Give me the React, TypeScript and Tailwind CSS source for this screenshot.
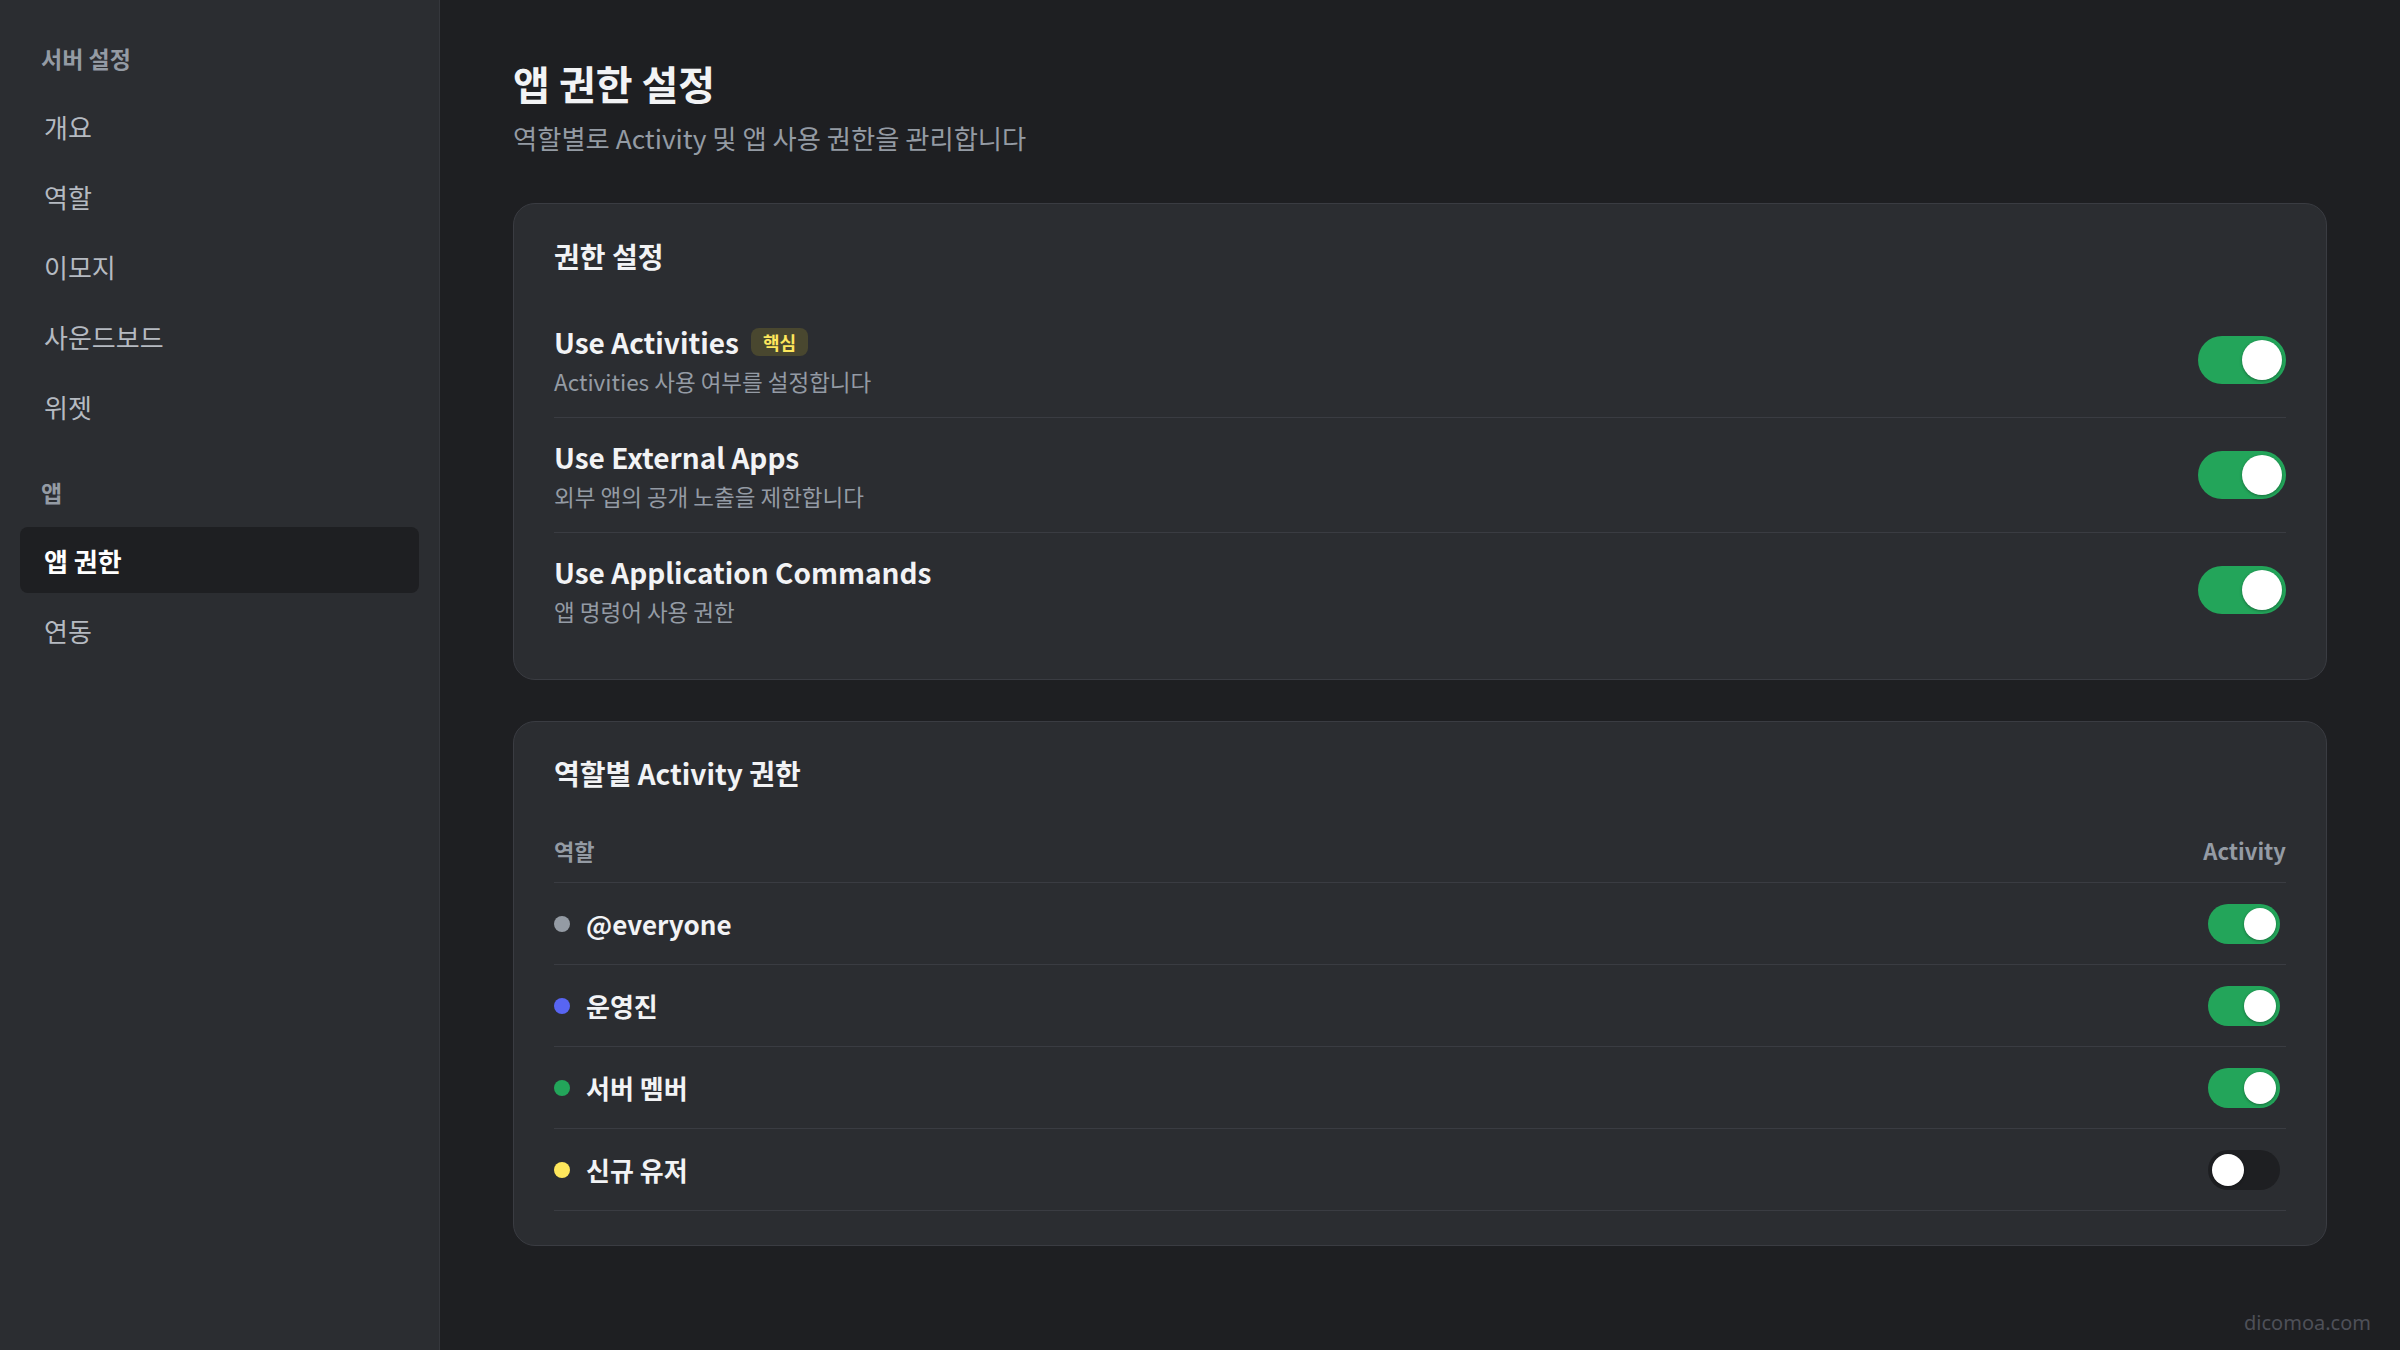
import React from "react";

const navGroups = [
  { title: "서버 설정", items: ["개요", "역할", "이모지", "사운드보드", "위젯"] },
  { title: "앱", items: ["앱 권한", "연동"] },
];

const permissions = [
  { name: "Use Activities", desc: "Activities 사용 여부를 설정합니다", badge: "핵심", on: true },
  { name: "Use External Apps", desc: "외부 앱의 공개 노출을 제한합니다", badge: "", on: true },
  { name: "Use Application Commands", desc: "앱 명령어 사용 권한", badge: "", on: true },
];

const roles = [
  { name: "@everyone", dot: "bg-[#949ba4]", on: true },
  { name: "운영진", dot: "bg-[#5865f2]", on: true },
  { name: "서버 멤버", dot: "bg-[#23a55a]", on: true },
  { name: "신규 유저", dot: "bg-[#fee75c]", on: false },
];

function BigToggle({ on }: { on: boolean }) {
  return (
    <div className={`flex h-[48px] w-[88px] shrink-0 rounded-full p-1 ${on ? "justify-end bg-[#23a55a]" : "justify-start bg-[#1e1f22]"}`}>
      <div className="size-10 rounded-full bg-white shadow-[0_1px_3px_rgba(0,0,0,0.35)]" />
    </div>
  );
}

function SmallToggle({ on }: { on: boolean }) {
  return (
    <div className={`flex h-10 w-[72px] rounded-full p-1 ${on ? "justify-end bg-[#23a55a]" : "justify-start bg-[#1e1f22]"}`}>
      <div className="size-8 rounded-full bg-white shadow-[0_1px_3px_rgba(0,0,0,0.35)]" />
    </div>
  );
}

export default function App() {
  return (
    <div className="relative flex min-h-screen bg-[#1e1f22] font-['Noto_Sans_CJK_KR','Noto_Sans',sans-serif]">
      {/* Sidebar */}
      <aside className="w-[440px] shrink-0 border-r border-[#35373c] bg-[#2b2d31] px-5 pt-[44px]">
        {navGroups.map((group, gi) => (
          <div key={group.title} className={gi > 0 ? "mt-[39px]" : ""}>
            <h2 className="mb-[21px] pl-[21px] text-[23px] font-bold leading-[28px] text-[#949ba4]">{group.title}</h2>
            <nav className="space-y-1">
              {group.items.map((item) => {
                const active = item === "앱 권한";
                return (
                  <div
                    key={item}
                    className={`flex h-[66px] items-center rounded-lg px-6 text-[26px] ${active ? "bg-[#1e1f22] font-bold text-white" : "text-[#b5bac1]"}`}
                  >
                    {item}
                  </div>
                );
              })}
            </nav>
          </div>
        ))}
      </aside>

      {/* Main */}
      <main className="flex-1 px-[73px] pt-[58px] pb-16">
        <h1 className="text-[40px] font-bold leading-[50px] text-[#f2f3f5]">앱 권한 설정</h1>
        <p className="mt-[13px] text-[26.3px] leading-[34px] text-[#949ba4]">역할별로 Activity 및 앱 사용 권한을 관리합니다</p>

        {/* Permission settings */}
        <section className="mt-[48px] rounded-[22px] border border-[#3a3c42] bg-[#2b2d31] px-10 py-8">
          <h3 className="mb-[27px] text-[28px] font-bold leading-[40px] text-[#f2f3f5]">권한 설정</h3>
          {permissions.map((p, i) => (
            <div
              key={p.name}
              className={`flex items-center justify-between py-5 ${i < permissions.length - 1 ? "border-b border-[#3a3c42]" : ""}`}
            >
              <div>
                <div className="flex items-center gap-3">
                  <span className="text-[28px] font-semibold leading-[38px] text-[#f2f3f5]">{p.name}</span>
                  {p.badge && (
                    <span className="rounded-lg bg-[#49472f] px-3 text-[18px] font-bold leading-[28px] text-[#fee75c]">{p.badge}</span>
                  )}
                </div>
                <p className="mt-1 text-[22.5px] leading-[32px] text-[#949ba4]">{p.desc}</p>
              </div>
              <BigToggle on={p.on} />
            </div>
          ))}
        </section>

        {/* Role activity permissions */}
        <section className="mt-[41px] rounded-[22px] border border-[#3a3c42] bg-[#2b2d31] px-10 pt-[31px] pb-[34px]">
          <h3 className="mb-[26px] text-[28px] font-bold leading-[40px] text-[#f2f3f5]">역할별 Activity 권한</h3>
          <div className="flex items-center justify-between border-b border-[#3a3c42] pt-4 pb-[17px] text-[22px] font-semibold leading-[30px] text-[#949ba4]">
            <span>역할</span>
            <span className="w-[84px] text-right">Activity</span>
          </div>
          {roles.map((r) => (
            <div key={r.name} className="flex h-[82px] items-center justify-between border-b border-[#3a3c42]">
              <div className="flex items-center gap-4">
                <span className={`size-4 rounded-full ${r.dot}`} />
                <span className="text-[26px] font-semibold text-[#f2f3f5]">{r.name}</span>
              </div>
              <div className="flex w-[84px] justify-center">
                <SmallToggle on={r.on} />
              </div>
            </div>
          ))}
        </section>
      </main>

      <span className="absolute right-[29px] bottom-[12px] font-['Noto_Sans',sans-serif] text-[20px] text-[#4e5058]">dicomoa.com</span>
    </div>
  );
}
